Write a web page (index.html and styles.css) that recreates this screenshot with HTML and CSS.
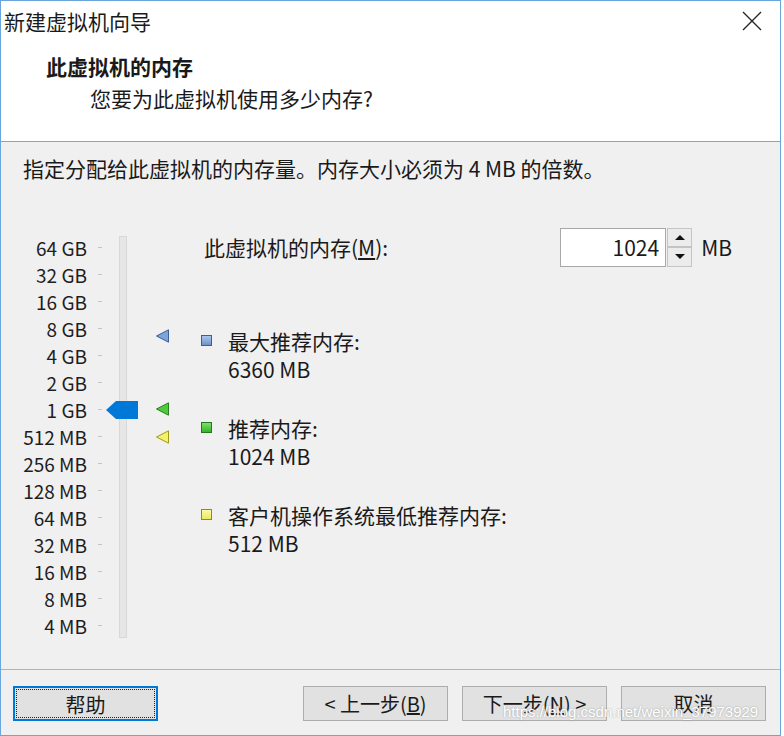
FILE: index.html
```html
<!DOCTYPE html>
<html lang="zh-CN">

<head>
    <meta charset="UTF-8">
    <title>新建虚拟机向导</title>
    <link rel="stylesheet" href="styles.css">
</head>

<body>
    <div class="janela">
        <!-- Cabeçalho branco -->
        <div class="cabecalho">
            <div class="barra-titulo">
                <span class="titulo">新建虚拟机向导</span>
                <svg class="fechar" width="20" height="20" viewBox="0 0 20 20">
                    <path d="M1 1 L19 19 M19 1 L1 19" stroke="#222" stroke-width="1.3" fill="none" />
                </svg>
            </div>
            <h1>此虚拟机的内存</h1>
            <p>您要为此虚拟机使用多少内存?</p>
        </div>

        <div class="conteudo">
            <p class="dica">指定分配给此虚拟机的内存量。内存大小必须为 4 MB 的倍数。</p>

            <div class="memoria">
                <!-- Escala -->
                <div class="escala">
                    <div class="linha"><span>64 GB</span><i></i></div>
                    <div class="linha"><span>32 GB</span><i></i></div>
                    <div class="linha"><span>16 GB</span><i></i></div>
                    <div class="linha"><span>8 GB</span><i></i></div>
                    <div class="linha"><span>4 GB</span><i></i></div>
                    <div class="linha"><span>2 GB</span><i></i></div>
                    <div class="linha"><span>1 GB</span><i></i></div>
                    <div class="linha"><span>512 MB</span><i></i></div>
                    <div class="linha"><span>256 MB</span><i></i></div>
                    <div class="linha"><span>128 MB</span><i></i></div>
                    <div class="linha"><span>64 MB</span><i></i></div>
                    <div class="linha"><span>32 MB</span><i></i></div>
                    <div class="linha"><span>16 MB</span><i></i></div>
                    <div class="linha"><span>8 MB</span><i></i></div>
                    <div class="linha"><span>4 MB</span><i></i></div>
                </div>

                <div class="trilho">
                    <svg class="cursor" width="32" height="18" viewBox="0 0 32 18">
                        <path d="M0 9 L10 0 L32 0 L32 18 L10 18 Z" fill="#0078d7" />
                    </svg>
                </div>

                <div class="marcadores">
                    <svg class="marca marca-max" width="13" height="14" viewBox="0 0 13 14">
                        <path d="M0.5 7 L12.5 0.8 L12.5 13.2 Z" fill="#7ba4d8" stroke="#3b5f99" />
                    </svg>
                    <svg class="marca marca-rec" width="13" height="14" viewBox="0 0 13 14">
                        <path d="M0.5 7 L12.5 0.8 L12.5 13.2 Z" fill="#4ecb3c" stroke="#2a7d20" />
                    </svg>
                    <svg class="marca marca-min" width="13" height="14" viewBox="0 0 13 14">
                        <path d="M0.5 7 L12.5 0.8 L12.5 13.2 Z" fill="#f3f06a" stroke="#9c9a1e" />
                    </svg>
                </div>

                <div class="ajustes">
                    <div class="linha-valor">
                        <label>此虚拟机的内存(<u>M</u>):</label>
                        <div class="spin">
                            <div class="spin-campo">1024</div>
                            <div class="spin-botoes">
                                <span class="seta-cima"></span>
                                <span class="seta-baixo"></span>
                            </div>
                        </div>
                        <span class="unidade">MB</span>
                    </div>

                    <div class="legenda primeira">
                        <span class="quadro azul"></span>
                        <div>
                            <p>最大推荐内存:</p>
                            <p>6360 MB</p>
                        </div>
                    </div>
                    <div class="legenda">
                        <span class="quadro verde"></span>
                        <div>
                            <p>推荐内存:</p>
                            <p>1024 MB</p>
                        </div>
                    </div>
                    <div class="legenda">
                        <span class="quadro amarelo"></span>
                        <div>
                            <p>客户机操作系统最低推荐内存:</p>
                            <p>512 MB</p>
                        </div>
                    </div>
                </div>
            </div>
        </div>

        <!-- Botões -->
        <div class="rodape">
            <button class="botao botao-foco">帮助</button>
            <div class="grupo-botoes">
                <button class="botao">&lt; 上一步(<u>B</u>)</button>
                <button class="botao">下一步(<u>N</u>) &gt;</button>
                <button class="botao">取消</button>
            </div>
            <span class="marca-agua">https://blog.csdn.net/weixin_37973929</span>
        </div>
    </div>
</body>

</html>
```

FILE: styles.css
```css
body {
    margin: 0;
    background: #ffffff;
    font-family: "Noto Sans CJK SC", "Noto Sans", sans-serif;
    font-size: 21px;
    color: #1a1a1a;
}

p,
h1 {
    margin: 0;
}

.janela {
    width: 781px;
    height: 736px;
    box-sizing: border-box;
    border: 1px solid #6aa6dc;
    background-color: #f0f0f0;
    display: flex;
    flex-direction: column;
}

.cabecalho {
    height: 140px;
    flex-shrink: 0;
    background: #ffffff;
    border-bottom: 1px solid #a0a0a0;
}

.barra-titulo {
    height: 40px;
    display: flex;
    align-items: center;
    justify-content: space-between;
    padding: 0 18px 0 3px;
}

.titulo {
    line-height: 40px;
}

.fechar {
    display: block;
}

.cabecalho h1 {
    font-size: 21px;
    font-weight: bold;
    line-height: 28px;
    margin: 11px 0 0 45px;
}

.cabecalho p {
    line-height: 28px;
    margin: 4px 0 0 89px;
}

.conteudo {
    padding: 12px 0 0 22px;
}

.dica {
    line-height: 28px;
}

.memoria {
    display: flex;
    margin-top: 48px;
}

/* Escala do slider */
.escala {
    padding-top: 4px;
}

.escala .linha {
    display: flex;
    align-items: center;
    height: 27px;
}

.escala span {
    width: 64px;
    flex-shrink: 0;
    white-space: nowrap;
    text-align: right;
    font-size: 19px;
    color: #1e1e1e;
}

.escala i {
    width: 4px;
    height: 1px;
    margin-left: 11px;
    background: #c4c4c4;
}

.trilho {
    position: relative;
    width: 6px;
    height: 400px;
    margin: 6px 0 0 17px;
    background: #e6e6e6;
    border: 1px solid #d8d8d8;
}

.cursor {
    position: absolute;
    left: -14px;
    top: 164px;
}

.marcadores {
    position: relative;
    width: 13px;
    margin-left: 29px;
}

.marca {
    position: absolute;
    left: 0;
}

.marca-max {
    top: 99px;
}

.marca-rec {
    top: 172px;
}

.marca-min {
    top: 200px;
}

.ajustes {
    width: 531px;
    margin: -3px 0 0 32px;
}

.linha-valor {
    display: flex;
    align-items: center;
    height: 40px;
}

.linha-valor label {
    flex: 1;
    padding-left: 3px;
}

.spin {
    display: flex;
    height: 39px;
}

.spin-campo {
    width: 98px;
    background: #ffffff;
    border: 1px solid #a8a8a8;
    text-align: right;
    padding-right: 6px;
    line-height: 37px;
}

.spin-botoes {
    display: flex;
    flex-direction: column;
    width: 25px;
    margin-left: 1px;
}

.spin-botoes span {
    flex: 1;
    background: #ececec;
    border: 1px solid #c4c4c4;
    position: relative;
}

.spin-botoes span::after {
    content: "";
    position: absolute;
    left: 7px;
    top: 6px;
    border-left: 5px solid transparent;
    border-right: 5px solid transparent;
}

.seta-cima::after {
    border-bottom: 5px solid #111;
}

.seta-baixo::after {
    border-top: 5px solid #111;
}

.unidade {
    margin-left: 9px;
}

.legenda {
    display: flex;
    margin-top: 31px;
}

.legenda.primeira {
    margin-top: 60px;
}

.legenda p {
    line-height: 28px;
}

.quadro {
    width: 9px;
    height: 9px;
    margin: 8px 16px 0 0;
    border: 1px solid #555;
}

.azul {
    background: linear-gradient(#a9c6ec, #6d93c9);
    border-color: #3d5f94;
}

.verde {
    background: linear-gradient(#7ee06a, #34b22a);
    border-color: #217a18;
}

.amarelo {
    background: linear-gradient(#fbf9a6, #ecea5e);
    border-color: #8f8d1a;
}

/* Rodapé */
.rodape {
    position: relative;
    box-sizing: border-box;
    margin-top: auto;
    height: 66px;
    flex-shrink: 0;
    border-top: 1px solid #b4b4b4;
    display: flex;
    justify-content: space-between;
    align-items: flex-start;
    padding: 16px 14px 0 12px;
}

.grupo-botoes {
    display: flex;
    gap: 14px;
}

.botao {
    width: 145px;
    height: 35px;
    font-family: inherit;
    font-size: 20px;
    color: #1a1a1a;
    background: #e1e1e1;
    border: 1px solid #adadad;
    padding: 0;
    line-height: 33px;
}

.botao-foco {
    border: 2px solid #0078d7;
    outline: 1px dotted #222;
    outline-offset: -4px;
}

.marca-agua {
    position: absolute;
    left: 502px;
    top: 33px;
    font-family: "Liberation Sans", sans-serif;
    font-size: 15px;
    color: #ffffff;
    text-shadow: 0 0 2px #9a9a9a;
}
```
